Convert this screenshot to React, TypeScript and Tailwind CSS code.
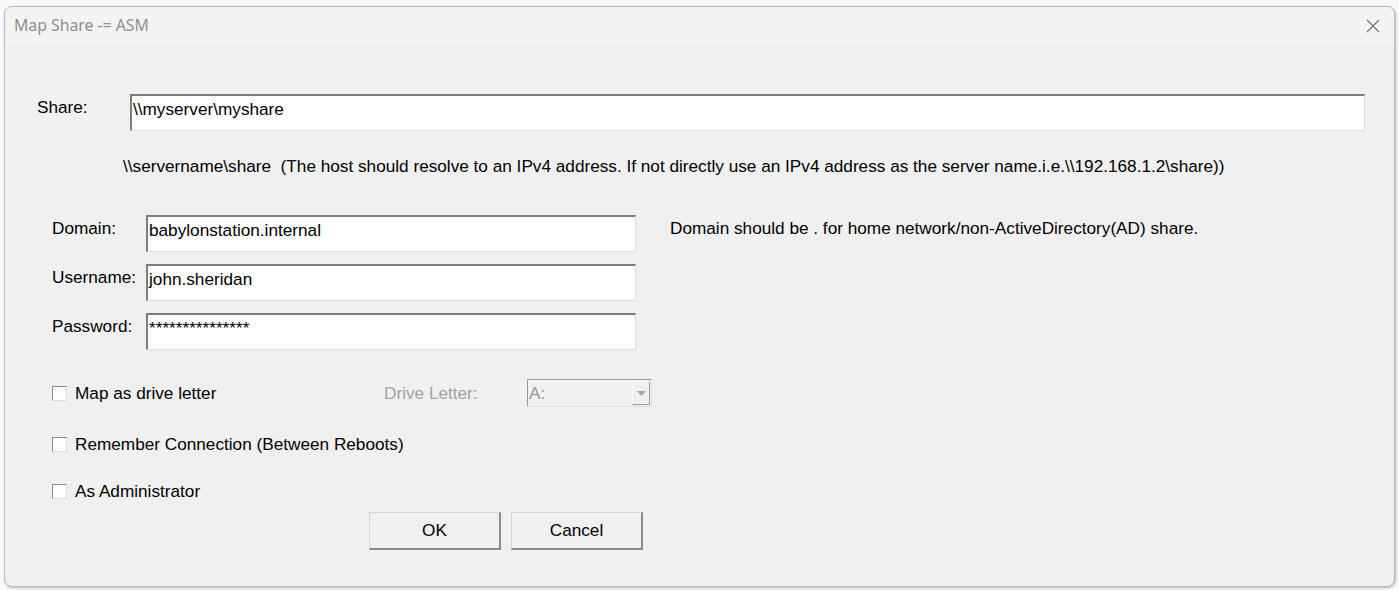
const sans = "font-['Liberation_Sans',Arial,sans-serif]";

function Field({ value, className }: { value: string; className: string }) {
  return (
    <div
      className={`h-[37px] border-t-2 border-l-2 border-b border-r border-t-[#7d7d7d] border-l-[#7d7d7d] border-b-[#dedede] border-r-[#dedede] bg-white pl-[1px] pt-[3px] text-[17.2px] leading-[20px] text-black ${className}`}
    >
      {value}
    </div>
  );
}

function CheckRow({ label, className = '' }: { label: string; className?: string }) {
  return (
    <label className={`flex items-center ${className}`}>
      <span className="h-[15px] w-[15px] border-t border-l border-b border-r border-t-[#8a8a8a] border-l-[#8a8a8a] border-b-[#dcdcdc] border-r-[#dcdcdc] bg-white" />
      <span className="ml-[8px] text-[17.2px] leading-[20px] text-black">{label}</span>
    </label>
  );
}

function Button({ children }: { children: string }) {
  return (
    <button className="flex h-[38px] w-[132px] items-center justify-center border-t border-l border-b-2 border-r-2 border-t-[#d6d6d6] border-l-[#d6d6d6] border-b-[#8a8a8a] border-r-[#8a8a8a] bg-[#f0f0f0] text-[17.2px] text-black">
      {children}
    </button>
  );
}

export default function App() {
  return (
    <div className={`h-[590px] w-[1399px] bg-[#f9f9f9] pl-[4px] pt-[6px] ${sans}`}>
      <div className="flex h-[581px] w-[1391px] flex-col overflow-hidden rounded-[8px] border border-[#b9b9b9] bg-[#f0f0f0] shadow-[1px_1px_3px_rgba(0,0,0,0.25)]">
        {/* title bar */}
        <div className="flex h-[38px] shrink-0 items-center justify-between bg-[#f3f3f3] pl-[9px] pr-[14px]">
          <span className="font-['Noto_Sans',sans-serif] text-[15.8px] text-[#8f8f8f]">Map Share -= ASM</span>
          <svg width="14" height="14" viewBox="0 0 14 14">
            <path d="M1 1 L13 13 M13 1 L1 13" stroke="#6f6f6f" strokeWidth="1.1" fill="none" />
          </svg>
        </div>

        {/* body */}
        <div className="flex flex-col pl-[32px]">
          <div className="mt-[49px] flex items-start">
            <span className="mt-[3px] w-[93px] text-[17.2px] leading-[20px] text-black">Share:</span>
            <Field value="\\myserver\myshare" className="w-[1235px]" />
          </div>

          <p className="ml-[86px] mt-[25px] text-[17.2px] leading-[20px] text-black">
            \\servername\share&nbsp;&nbsp;(The host should resolve to an IPv4 address. If not directly use an IPv4 address as the server name.i.e.\\192.168.1.2\share))
          </p>

          <div className="ml-[15px] mt-[39px] flex items-start">
            <div className="flex flex-col gap-[12px]">
              <div className="flex items-start">
                <span className="mt-[3px] w-[94px] text-[17.2px] leading-[20px] text-black">Domain:</span>
                <Field value="babylonstation.internal" className="w-[490px]" />
              </div>
              <div className="flex items-start">
                <span className="mt-[3px] w-[94px] text-[17.2px] leading-[20px] text-black">Username:</span>
                <Field value="john.sheridan" className="w-[490px]" />
              </div>
              <div className="flex items-start">
                <span className="mt-[3px] w-[94px] text-[17.2px] leading-[20px] text-black">Password:</span>
                <Field value="***************" className="w-[490px]" />
              </div>
            </div>
            <span className="ml-[34px] mt-[3px] text-[17.2px] leading-[20px] text-black">
              Domain should be . for home network/non-ActiveDirectory(AD) share.
            </span>
          </div>

          <div className="ml-[15px] mt-[29px] flex h-[28px] items-center">
            <CheckRow label="Map as drive letter" className="w-[332px]" />
            <span className="w-[143px] text-[17.2px] leading-[20px] text-[#a3a3a3]">Drive Letter:</span>
            <div className="flex h-[28px] w-[125px] items-stretch border-t border-l border-b border-r border-t-[#9a9a9a] border-l-[#9a9a9a] border-b-[#e0e0e0] border-r-[#e0e0e0] bg-[#f0f0f0]">
              <span className="flex-1 pl-[1px] text-[17.2px] leading-[26px] text-[#9a9a9a]">A:</span>
              <span className="my-[1px] mr-[1px] flex w-[18px] items-center justify-center border-l border-t border-b border-r border-l-[#f8f8f8] border-t-[#f8f8f8] border-b-[#a0a0a0] border-r-[#a0a0a0] bg-[#f0f0f0]">
                <svg width="9" height="5" viewBox="0 0 9 5">
                  <path d="M0 0 L9 0 L4.5 5 Z" fill="#a8a8a8" />
                </svg>
              </span>
            </div>
          </div>

          <CheckRow label="Remember Connection (Between Reboots)" className="ml-[15px] mt-[27px]" />
          <CheckRow label="As Administrator" className="ml-[15px] mt-[27px]" />

          <div className="ml-[332px] mt-[11px] flex gap-[10px]">
            <Button>OK</Button>
            <Button>Cancel</Button>
          </div>
        </div>
      </div>
    </div>
  );
}
